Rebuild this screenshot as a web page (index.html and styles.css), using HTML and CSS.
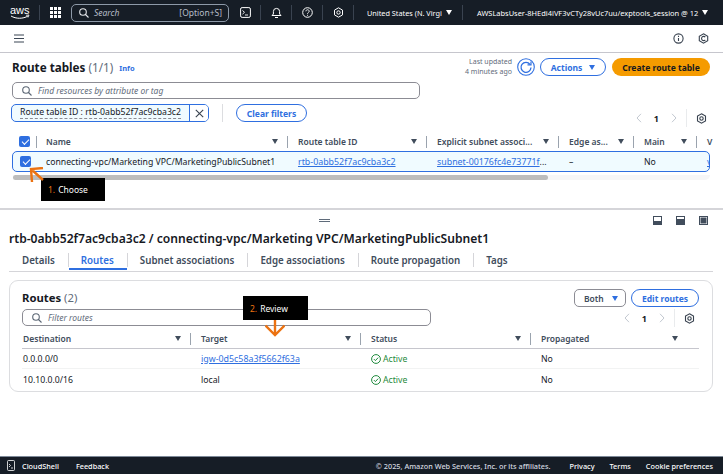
FILE: index.html
```html
<!DOCTYPE html>
<html lang="en">
<head>
<meta charset="utf-8">
<title>Route tables</title>
<link rel="stylesheet" href="styles.css">
</head>
<body>
<div class="app">
  <header class="nav">
    <svg class="logo" width="20" height="15" viewBox="0 0 20 15"><text x="0" y="9" class="logo-text">aws</text><path d="M1 11c5 3 12 3 17 0" fill="none" stroke="#fff" stroke-width="1"/><path d="M16 10.300l3-.3-1 2.500" fill="none" stroke="#fff" stroke-width=".8"/></svg>
    <span class="nav-sep"></span>
    <svg class="grid-ico" width="11" height="11" viewBox="0 0 11 11" fill="#fff"><rect width="3" height="3"/><rect x="4" width="3" height="3"/><rect x="8" width="3" height="3"/><rect y="4" width="3" height="3"/><rect x="4" y="4" width="3" height="3"/><rect x="8" y="4" width="3" height="3"/><rect y="8" width="3" height="3"/><rect x="4" y="8" width="3" height="3"/><rect x="8" y="8" width="3" height="3"/></svg>
    <div class="nav-search">
      <svg width="10" height="10" viewBox="0 0 10 10" fill="none" stroke="#e5e7eb" stroke-width="1.100"><circle cx="4" cy="4" r="3.300"/><path d="M6.500 6.500L9.500 9.500"/></svg>
      <span class="nav-search-text">Search</span>
      <span class="nav-shortcut">[Option+S]</span>
    </div>
    <svg class="nav-ico nav-ico-first" width="11" height="11" viewBox="0 0 11 11" fill="none" stroke="#fff"><rect x=".6" y=".6" width="9.800" height="9.800" rx="1.500"/><path d="M2.500 3.500l2 1.800-2 1.800M5 8h3" stroke-width=".9"/></svg>
    <span class="nav-sep"></span>
    <svg class="nav-ico" width="11" height="12" viewBox="0 0 11 12" fill="none" stroke="#fff"><path d="M1 8.500h9L8.600 7V4.500a3.100 3.100 0 0 0-6.200 0V7z"/><path d="M4 10.500h3"/></svg>
    <span class="nav-sep"></span>
    <svg class="nav-ico" width="11" height="11" viewBox="0 0 11 11" fill="none" stroke="#fff"><circle cx="5.500" cy="5.500" r="4.800"/><path d="M3.900 4.300c0-2.100 3.300-2.100 3.300 0 0 1.200-1.700 1.200-1.700 2.500M5.500 7.800v1" stroke-width=".9"/></svg>
    <span class="nav-sep"></span>
    <svg class="nav-ico" width="11" height="11" viewBox="0 0 11 11" fill="none" stroke="#fff"><path d="M5.500.8l4 2.300v4.800l-4 2.300-4-2.300V3.100z"/><circle cx="5.500" cy="5.500" r="1.700"/></svg>
    <span class="nav-sep"></span>
    <span class="nav-region">United States (N. Virgi</span>
    <span class="caret caret-white"></span>
    <span class="nav-sep"></span>
    <span class="nav-user">AWSLabsUser-8HEdi4iVF3vCTy28vUc7uu/exptools_session @ 12</span>
    <span class="caret caret-white"></span>
  </header>

  <div class="toolbar">
    <svg width="10" height="9" viewBox="0 0 10 9" stroke="#3b4654" stroke-width="1.100"><path d="M0 1h10M0 4.500h10M0 8h10"/></svg>
    <span class="toolbar-fill"></span>
    <svg width="11" height="11" viewBox="0 0 11 11" fill="none" stroke="#38424f" stroke-width="1.100"><circle cx="5.500" cy="5.500" r="4.600"/><path d="M5.500 5v3M5.500 2.800v1.100"/></svg>
    <svg width="11" height="11" viewBox="0 0 11 11" fill="none" stroke="#38424f" stroke-width="1.100"><path d="M5.500.8l4.200 2.400v4.600l-4.200 2.400-4.200-2.400V3.200z"/><path d="M7.300 4.200a2.100 2.100 0 1 0 0 2.600"/></svg>
  </div>

  <section class="top-panel">
    <div class="title-row">
      <h1 class="page-title">Route tables <span class="count">(1/1)</span></h1>
      <a class="info">Info</a>
      <span class="toolbar-fill"></span>
      <div class="updated">Last updated<br>4 minutes ago</div>
      <span class="refresh">
        <svg width="18" height="18" viewBox="0 0 18 18" fill="none" stroke="#2f6fe0" stroke-width="1.100"><circle cx="9" cy="9" r="8.300"/><path d="M13 6.300A5 5 0 1 0 14 9.500" stroke-width="1.300"/><path d="M10.500 6.800H14V3.500" stroke-width="1.200"/></svg>
      </span>
      <span class="btn btn-outline btn-actions">Actions <span class="caret caret-blue"></span></span>
      <span class="btn btn-primary">Create route table</span>
    </div>
    <div class="search search-top">
      <svg width="10" height="10" viewBox="0 0 10 10" fill="none" stroke="#5b6674" stroke-width="1.100"><circle cx="4" cy="4" r="3.300"/><path d="M6.500 6.500L9.500 9.500"/></svg>
      <span class="placeholder">Find resources by attribute or tag</span>
    </div>
    <div class="filter-row">
      <div class="token">
        <span class="token-label"><span class="token-text">Route table ID : rtb-0abb52f7ac9cba3c2</span></span>
        <span class="token-close"><svg width="9" height="9" viewBox="0 0 9 9" stroke="#38424f" stroke-width="1.100"><path d="M.8.800l7.400 7.400M8.200.800L.8 8.200"/></svg></span>
      </div>
      <span class="vsep"></span>
      <span class="btn btn-outline btn-clear">Clear filters</span>
      <span class="toolbar-fill"></span>
      <div class="pager pager-top">
        <svg width="6" height="10" viewBox="0 0 6 10" fill="none" stroke="#c2c8d0"><path d="M5 .8L1 5l4 4.200"/></svg>
        <b>1</b>
        <svg width="6" height="10" viewBox="0 0 6 10" fill="none" stroke="#c2c8d0"><path d="M1 .8L5 5 1 9.200"/></svg>
        <span class="pager-sep"></span>
        <svg class="gear" width="11" height="11" viewBox="0 0 11 11" fill="none" stroke="#38424f" stroke-width="1.100"><path d="M5.500.8l4 2.300v4.800l-4 2.300-4-2.300V3.100z"/><circle cx="5.500" cy="5.500" r="1.700"/></svg>
      </div>
    </div>
    <div class="rt-table">
      <div class="rt-head rt-grid">
        <span class="rt-check"><span class="check"></span><i class="hsep"></i></span>
        <span class="th">Name<span class="sort"></span><i class="hsep"></i></span>
        <span class="th">Route table ID<span class="sort"></span><i class="hsep"></i></span>
        <span class="th">Explicit subnet associ...<span class="sort"></span><i class="hsep"></i></span>
        <span class="th">Edge as...<span class="sort"></span><i class="hsep"></i></span>
        <span class="th">Main<span class="sort"></span><i class="hsep"></i></span>
        <span class="th">V</span>
      </div>
      <div class="rt-row rt-grid">
        <span class="rt-check"><span class="check"></span></span>
        <span class="td">connecting-vpc/Marketing VPC/MarketingPublicSubnet1</span>
        <span class="td"><a class="link">rtb-0abb52f7ac9cba3c2</a></span>
        <span class="td"><a class="link">subnet-00176fc4e73771f</a>...</span>
        <span class="td">–</span>
        <span class="td">No</span>
        <span class="td"><a class="link">v</a></span>
      </div>
      <div class="scroll-track"><div class="scroll-thumb"></div></div>
    </div>
  </section>

  <section class="bottom-panel">
    <div class="drag-row"><span class="drag"></span>
      <div class="panel-icons">
        <svg width="9" height="9" viewBox="0 0 9 9"><rect x=".5" y=".5" width="8" height="8" fill="none" stroke="#414d5c"/><rect x="1" y="5" width="7" height="3.500" fill="#414d5c"/></svg>
        <svg width="9" height="9" viewBox="0 0 9 9"><rect x=".5" y=".5" width="8" height="8" fill="none" stroke="#414d5c"/><rect x="1" y="3" width="7" height="5.500" fill="#414d5c"/></svg>
        <svg width="9" height="9" viewBox="0 0 9 9"><rect x=".5" y=".5" width="8" height="8" fill="none" stroke="#414d5c"/><rect x="1.500" y="1.500" width="6" height="6" fill="#414d5c"/></svg>
      </div>
    </div>
    <h2 class="detail-title">rtb-0abb52f7ac9cba3c2 / connecting-vpc/Marketing VPC/MarketingPublicSubnet1</h2>
    <nav class="tabs">
      <span class="tab">Details</span>
      <span class="tab tab-active">Routes</span>
      <span class="tab">Subnet associations</span>
      <span class="tab">Edge associations</span>
      <span class="tab">Route propagation</span>
      <span class="tab">Tags</span>
    </nav>
    <div class="card">
      <div class="card-head">
        <h3 class="card-title">Routes <span class="count">(2)</span></h3>
        <span class="toolbar-fill"></span>
        <span class="select">Both <span class="caret caret-blue"></span></span>
        <span class="btn btn-outline btn-edit">Edit routes</span>
      </div>
      <div class="card-filter">
        <div class="search search-card">
          <svg width="10" height="10" viewBox="0 0 10 10" fill="none" stroke="#5b6674" stroke-width="1.100"><circle cx="4" cy="4" r="3.300"/><path d="M6.500 6.500L9.500 9.500"/></svg>
          <span class="placeholder">Filter routes</span>
        </div>
        <span class="toolbar-fill"></span>
        <div class="pager pager-card">
          <svg width="6" height="10" viewBox="0 0 6 10" fill="none" stroke="#c2c8d0"><path d="M5 .8L1 5l4 4.200"/></svg>
          <b>1</b>
          <svg width="6" height="10" viewBox="0 0 6 10" fill="none" stroke="#c2c8d0"><path d="M1 .8L5 5 1 9.200"/></svg>
          <span class="pager-sep"></span>
          <svg class="gear" width="11" height="11" viewBox="0 0 11 11" fill="none" stroke="#38424f" stroke-width="1.100"><path d="M5.500.8l4 2.300v4.800l-4 2.300-4-2.300V3.100z"/><circle cx="5.500" cy="5.500" r="1.700"/></svg>
        </div>
      </div>
      <div class="routes">
        <div class="routes-head routes-grid">
          <span class="th">Destination<span class="sort"></span><i class="hsep"></i></span>
          <span class="th">Target<span class="sort"></span><i class="hsep"></i></span>
          <span class="th">Status<span class="sort"></span><i class="hsep"></i></span>
          <span class="th">Propagated<span class="sort"></span></span>
        </div>
        <div class="routes-row routes-grid">
          <span class="td">0.0.0.0/0</span>
          <span class="td"><a class="link">igw-0d5c58a3f5662f63a</a></span>
          <span class="td status"><svg width="10" height="10" viewBox="0 0 10 10" fill="none" stroke="#1f8a3d"><circle cx="5" cy="5" r="4.400"/><path d="M2.900 5.100l1.500 1.500 2.800-3"/></svg>Active</span>
          <span class="td">No</span>
        </div>
        <div class="routes-row routes-grid">
          <span class="td">10.10.0.0/16</span>
          <span class="td">local</span>
          <span class="td status"><svg width="10" height="10" viewBox="0 0 10 10" fill="none" stroke="#1f8a3d"><circle cx="5" cy="5" r="4.400"/><path d="M2.900 5.100l1.500 1.500 2.800-3"/></svg>Active</span>
          <span class="td">No</span>
        </div>
      </div>
    </div>
  </section>

  <footer class="footer">
    <svg width="8" height="11" viewBox="0 0 8 11" fill="none" stroke="#fff" stroke-width=".8"><rect x=".5" y=".5" width="7" height="10" rx="1"/><path d="M2 4l1.500 1.500L2 7M4 8h2"/></svg>
    <span class="foot-shell">CloudShell</span>
    <span class="foot-feedback">Feedback</span>
    <span class="toolbar-fill"></span>
    <span class="foot-copy">© 2025, Amazon Web Services, Inc. or its affiliates.</span>
    <span>Privacy</span>
    <span>Terms</span>
    <span>Cookie preferences</span>
  </footer>
</div>

<div class="callout callout-1"><em>1.</em> Choose</div>
<svg class="arrow arrow-1" width="18" height="18" viewBox="0 0 18 18" fill="none" stroke="#ec7211" stroke-width="2.400"><path d="M14 13L2 2M14 1L2 2L3 15"/></svg>
<div class="callout callout-2"><em>2.</em> Review</div>
<svg class="arrow arrow-2" width="20" height="17" viewBox="0 0 20 17" fill="none" stroke="#ec7211" stroke-width="2.400"><path d="M10 0V15M.5 5.500L10 15l9.500-9.500"/></svg>
</body>
</html>
```

FILE: styles.css
```css
* { box-sizing: border-box; }
html, body { margin: 0; height: 100%; }
body {
  font-family: "Noto Sans", "Open Sans", sans-serif;
  font-size: 9px;
  color: #16191f;
  background: #fff;
  overflow: hidden;
}
.app { width: 723px; height: 474px; display: flex; flex-direction: column; }
.toolbar-fill { flex: 1; }

/* Top navigation */
.nav {
  height: 25px;
  background: #161d26;
  color: #fff;
  display: flex;
  align-items: center;
  padding-left: 10px;
  flex: none;
}
.logo { margin-right: 9px; }
.logo-text { font: 11px "Liberation Sans", sans-serif; fill: #fff; }
.nav-sep { width: 1px; height: 15px; background: #3a4350; }
.grid-ico { margin-left: 10px; }
.nav-search {
  width: 158px;
  height: 18px;
  margin-left: 10px;
  border: 1px solid #8d99a8;
  border-radius: 5px;
  display: flex;
  align-items: center;
  padding: 0 6px 0 7px;
}
.nav-search-text { font-style: italic; color: #b6bec9; margin-left: 5px; font-size: 8.500px; flex: 1; }
.nav-shortcut { color: #b6bec9; font-size: 8.500px; }
.nav-ico { margin: 0 9px 0 10px; }
.nav-ico-first { margin-left: 11px; }
.nav-region { margin-right: 7px; padding-left: 13px; font-size: 7.300px; width: 85px; white-space: nowrap; }
.caret { display: inline-block; width: 0; height: 0; border-left: 3.500px solid transparent; border-right: 3.500px solid transparent; border-top: 5px solid; }
.caret-white { color: #fff; }
.caret-blue { color: #2f6fe0; }
.nav .caret-white { margin-right: 10px; }
.nav-user { margin: 0 4px 0 14px; font-size: 7.450px; white-space: nowrap; }

/* Tools bar */
.toolbar {
  height: 28px;
  flex: none;
  display: flex;
  align-items: center;
  gap: 14px;
  padding: 0 14px;
  border-bottom: 1px solid #c6c6cd;
}

/* Top panel */
.top-panel {
  height: 157px;
  flex: none;
  padding: 0 12px;
  border-bottom: 2px solid #d5d5d9;
}
.title-row { height: 29px; display: flex; align-items: center; padding-bottom: 1px; }
.page-title { margin: 0; font-size: 11.700px; font-weight: 700; }
.count { font-weight: 400; color: #5f6b7a; }
.info { color: #2f6fe0; font-size: 7.500px; font-weight: 700; margin: 2px 0 0 6px; }
.updated { text-align: right; font-size: 7px; line-height: 10px; color: #5f6b7a; margin-right: 5px; }
.refresh { width: 18px; height: 18px; margin-right: 5px; display: flex; }
.btn {
  display: inline-flex;
  align-items: center;
  justify-content: center;
  height: 18px;
  border-radius: 9px;
  font-weight: 700;
  font-size: 8.500px;
  white-space: nowrap;
}
.btn-outline { border: 1px solid #2f6fe0; color: #2f6fe0; background: #fff; }
.btn-primary { background: #f59b00; color: #16191f; width: 98px; margin: 0 1px 0 6px; }
.btn-actions { width: 66px; gap: 7px; }
.search {
  display: flex;
  align-items: center;
  gap: 6px;
  height: 17px;
  border: 1px solid #8c8c94;
  border-radius: 5px;
  padding-left: 9px;
  background: #fff;
}
.search-top { width: 408px; }
.placeholder { font-style: italic; color: #5f6b7a; font-size: 8.500px; }
.filter-row { display: flex; align-items: flex-start; margin-top: 5px; height: 28px; margin-left: -1px; }
.token {
  display: flex;
  height: 18px;
  width: 198px;
  border: 1px solid #2f6fe0;
  border-radius: 5px;
  background: #f0fbff;
  overflow: hidden;
}
.token-label { flex: 1; display: flex; align-items: center; padding-left: 8px; }
.token-text { font-size: 8.700px; border-bottom: 1px dashed #8c8c94; line-height: 11px; white-space: nowrap; }
.token-close { width: 19px; display: flex; align-items: center; justify-content: center; border-left: 1px solid #2f6fe0; background: #fff; }
.vsep { width: 1px; height: 18px; background: #dcdde0; margin: 0 13px 0 13px; }
.btn-clear { width: 71px; }
.pager { display: flex; align-items: center; gap: 12px; font-size: 9px; height: 18px; }
.pager-top { margin-top: 5px; margin-right: 4px; }
.pager-sep { width: 1px; height: 18px; background: #e9ebed; margin: 0 -3px; }

/* Resource table */
.rt-table { width: 698px; }
.rt-grid { display: grid; grid-template-columns: 34px 252px 139px 132px 75px 63px 3px; }
.rt-head { height: 19px; align-items: center; }
.rt-check { display: flex; align-items: center; padding-left: 7px; position: relative; height: 12px; }
.rt-check .hsep { left: 24px; right: auto; }
.check {
  width: 11px;
  height: 11px;
  border-radius: 2px;
  background: #2f6fe0;
  position: relative;
  flex: none;
}
.check::after {
  content: "";
  position: absolute;
  left: 2.500px;
  top: 2.500px;
  width: 6px;
  height: 3px;
  border-left: 1.300px solid #fff;
  border-bottom: 1.300px solid #fff;
  transform: rotate(-45deg);
}
.th { position: relative; display: flex; align-items: center; white-space: nowrap; font-size: 8.500px; font-weight: 600; color: #414d5c; height: 12px; }
.sort {
  position: absolute;
  right: 20px;
  top: 3px;
  width: 0;
  height: 0;
  border-left: 3px solid transparent;
  border-right: 3px solid transparent;
  border-top: 5.500px solid #414d5c;
}
.hsep { position: absolute; right: 10px; top: 0; width: 1px; height: 12px; background: #9aa3ae; }
.rt-row {
  height: 21px;
  align-items: center;
  border: 1px solid #2f6fe0;
  border-radius: 5px;
  background: #f0fbff;
  overflow: hidden;
  grid-template-columns: 33px 252px 139px 132px 75px 63px 3px;
}
.td { white-space: nowrap; font-size: 8.700px; color: #16191f; padding-top: 1px; }
.link { color: #2f6fe0; text-decoration: underline; font-size: 8.850px; }
.scroll-track { height: 5px; margin-top: 3px; margin-left: 1px; border-radius: 0 0 6px 6px; background: #f6f6f7; }
.scroll-thumb { width: 535px; height: 5px; background: #bdbdbd; border-radius: 3px; }

/* Bottom panel */
.bottom-panel { flex: 1; padding: 0 10px 0 9px; display: flex; flex-direction: column; }
.drag-row { height: 20px; display: flex; align-items: center; position: relative; flex: none; }
.drag { width: 11px; height: 3px; border-top: 1px solid #5f6b7a; border-bottom: 1px solid #5f6b7a; margin-left: 310px; }
.panel-icons { position: absolute; right: 5px; top: 6px; display: flex; gap: 14px; }
.detail-title { margin: 0; font-size: 12.100px; font-weight: 600; line-height: 17px; white-space: nowrap; }
.tabs { display: flex; height: 25px; flex: none; border-bottom: 1px solid #d5d5d9; align-items: flex-start; padding-top: 6px; }
.tab { padding: 1px 13px 0 12px; height: 14px; line-height: 13px; font-size: 9.750px; font-weight: 600; color: #414d5c; border-right: 1px solid #d5d5d9; position: relative; white-space: nowrap; }
.tab:first-child { padding-left: 13px; }
.tab:last-child { border-right: 0; }
.tab-active { color: #2f6fe0; }
.tab-active::after { content: ""; position: absolute; left: 0; right: 0; top: 15px; height: 2px; background: #2f6fe0; }
.card {
  margin-top: 8px;
  height: 112px;
  border: 1px solid #dcdde0;
  border-radius: 9px;
  padding: 0 13px 0 12px;
  flex: none;
}
.card-head { display: flex; align-items: center; height: 28px; padding-top: 6px; }
.card-title { margin: -1px 0 0; font-size: 11.300px; font-weight: 700; }
.select { display: inline-flex; align-items: center; gap: 8px; width: 52px; height: 18px; padding-left: 9px; border: 1px solid #8c8c94; border-radius: 5px; font-size: 8.500px; color: #414d5c; font-weight: 600; margin-right: 5px; }
.btn-edit { width: 68px; }
.card-filter { display: flex; align-items: flex-start; height: 22px; }
.search-card { width: 409px; }
.pager-card { margin-right: 4px; }
.routes-head { height: 18px; align-items: center; border-bottom: 1px solid #c6c6cd; padding-bottom: 2px; }
.routes-grid { display: grid; grid-template-columns: 178px 170px 170px 157px; padding-left: 1px; }
.routes-row { height: 20px; align-items: center; border-bottom: 1px solid #f2f3f3; }
.routes-row:last-child { border-bottom: 0; }
.status { display: flex; align-items: center; gap: 2px; color: #1f8a3d; }

/* Footer */
.footer {
  height: 18px;
  flex: none;
  background: #161d26;
  border-top: 1px solid #7d8998;
  color: #fff;
  display: flex;
  align-items: center;
  gap: 15px;
  padding: 0 10px 0 7px;
  font-size: 7.300px;
  font-weight: 500;
}
.foot-shell { margin-left: -8px; }
.foot-feedback { margin-left: 2px; }
.foot-copy { color: #d5dae0; margin-right: 4px; }

/* Annotation overlays */
.callout {
  position: absolute;
  background: #000;
  color: #fff;
  font-size: 8.500px;
  display: flex;
  align-items: center;
  gap: 3px;
  padding-left: 7px;
}
.callout em { font-style: normal; color: #ec7211; }
.callout-1 { left: 41px; top: 178px; width: 64px; height: 23px; }
.callout-2 { left: 243px; top: 296px; width: 65px; height: 24px; }
.arrow { position: absolute; }
.arrow-1 { left: 29px; top: 167px; }
.arrow-2 { left: 265px; top: 320px; }
```
